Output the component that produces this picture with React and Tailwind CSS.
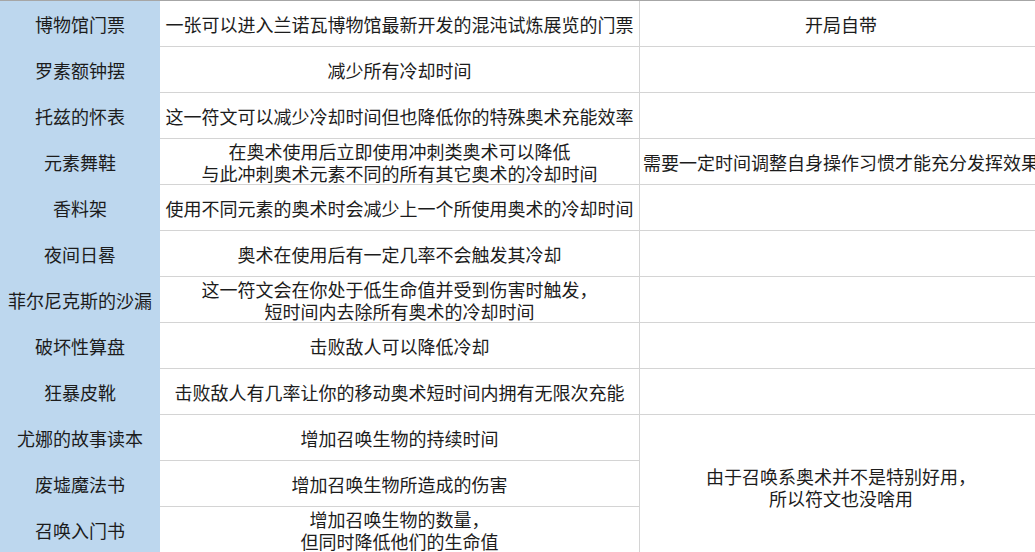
const rows = [
  { name: '博物馆门票', desc: ['一张可以进入兰诺瓦博物馆最新开发的混沌试炼展览的门票'], note: ['开局自带'] },
  { name: '罗素额钟摆', desc: ['减少所有冷却时间'], note: [] },
  { name: '托兹的怀表', desc: ['这一符文可以减少冷却时间但也降低你的特殊奥术充能效率'], note: [] },
  {
    name: '元素舞鞋',
    desc: ['在奥术使用后立即使用冲刺类奥术可以降低', '与此冲刺奥术元素不同的所有其它奥术的冷却时间'],
    note: ['需要一定时间调整自身操作习惯才能充分发挥效果'],
  },
  { name: '香料架', desc: ['使用不同元素的奥术时会减少上一个所使用奥术的冷却时间'], note: [] },
  { name: '夜间日晷', desc: ['奥术在使用后有一定几率不会触发其冷却'], note: [] },
  { name: '菲尔尼克斯的沙漏', desc: ['这一符文会在你处于低生命值并受到伤害时触发，', '短时间内去除所有奥术的冷却时间'], note: [] },
  { name: '破坏性算盘', desc: ['击败敌人可以降低冷却'], note: [] },
  { name: '狂暴皮靴', desc: ['击败敌人有几率让你的移动奥术短时间内拥有无限次充能'], note: [] },
  { name: '尤娜的故事读本', desc: ['增加召唤生物的持续时间'] },
  { name: '废墟魔法书', desc: ['增加召唤生物所造成的伤害'] },
  { name: '召唤入门书', desc: ['增加召唤生物的数量，', '但同时降低他们的生命值'] },
]

function Lines({ lines }) {
  return (
    <div className="flex flex-col items-center leading-[22px] whitespace-nowrap">
      {lines.map((line) => (
        <span key={line}>{line}</span>
      ))}
    </div>
  )
}

export default function App() {
  return (
    <div
      className="h-screen w-screen overflow-hidden bg-white text-[18px] text-[#1c1c1c]"
      style={{ fontFamily: '"Noto Sans CJK SC", "Noto Sans", sans-serif' }}
    >
      <div className="grid w-[1042px] grid-cols-[160px_480px_402px] border-t border-[#a6a6a6]">
        {rows.map((row, i) => (
          <div key={row.name} className="contents">
            <div className="flex h-[46px] items-center justify-center bg-[#bdd7ee] whitespace-nowrap">
              {row.name}
            </div>
            <div className="flex h-[46px] items-center justify-center border-r border-b border-[#d4d4d4]">
              <Lines lines={row.desc} />
            </div>
            {row.note ? (
              <div className="flex h-[46px] items-center justify-center border-b border-[#d4d4d4]">
                <Lines lines={row.note} />
              </div>
            ) : i === 9 ? (
              <div className="row-span-3 flex items-center justify-center pt-[6px] border-b border-[#d4d4d4]">
                <Lines lines={['由于召唤系奥术并不是特别好用，', '所以符文也没啥用']} />
              </div>
            ) : null}
          </div>
        ))}
      </div>
    </div>
  )
}
